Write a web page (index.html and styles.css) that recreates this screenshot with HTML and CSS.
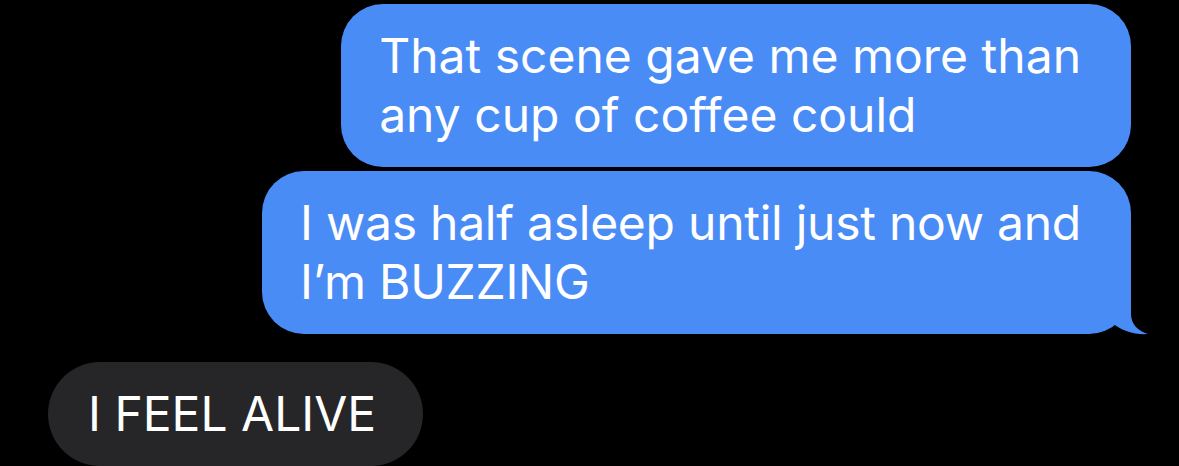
FILE: index.html
```html
<!DOCTYPE html>
<html lang="en">
<head>
<meta charset="utf-8">
<title>Messages</title>
<link rel="stylesheet" href="styles.css">
</head>
<body>
<main class="thread">
  <div class="bubble sent">That scene gave me more than<br>any cup of coffee could</div>
  <div class="bubble sent last">I was half asleep until just now and<br>I’m BUZZING
    <svg class="tail" width="60" height="50" viewBox="0 0 60 50" aria-hidden="true">
      <path d="M43 2 L43 30 C43 40 50 47 60 50 C47 51 34 47 24 39 Z"/>
    </svg>
  </div>
  <div class="bubble received">I FEEL ALIVE</div>
</main>
</body>
</html>
```
FILE: styles.css
```css
html, body {
  margin: 0;
  background: #000;
}

body {
  width: 1179px;
  height: 466px;
  overflow: hidden;
  font-family: Inter, "Noto Sans", "Liberation Sans", sans-serif;
}

.thread {
  display: flex;
  flex-direction: column;
  align-items: flex-end;
  padding: 4px 48px 0 48px;
}

.bubble {
  position: relative;
  box-sizing: border-box;
  font-size: 48px;
  line-height: 59px;
  color: #fff;
  padding: 22px 50px 23px 38px;
  border-radius: 42px;
  white-space: nowrap;
}

.sent {
  background: #4a8cf6;
}

.sent + .sent {
  margin-top: 4px;
}

.last {
  letter-spacing: -0.25px;
}

.tail {
  position: absolute;
  right: -17px;
  bottom: 0;
  fill: #4a8cf6;
  overflow: visible;
}

.received {
  align-self: flex-start;
  margin-top: 28px;
  background: #262628;
  padding: 22px 47px 23px 40px;
  border-radius: 52px;
}
```
